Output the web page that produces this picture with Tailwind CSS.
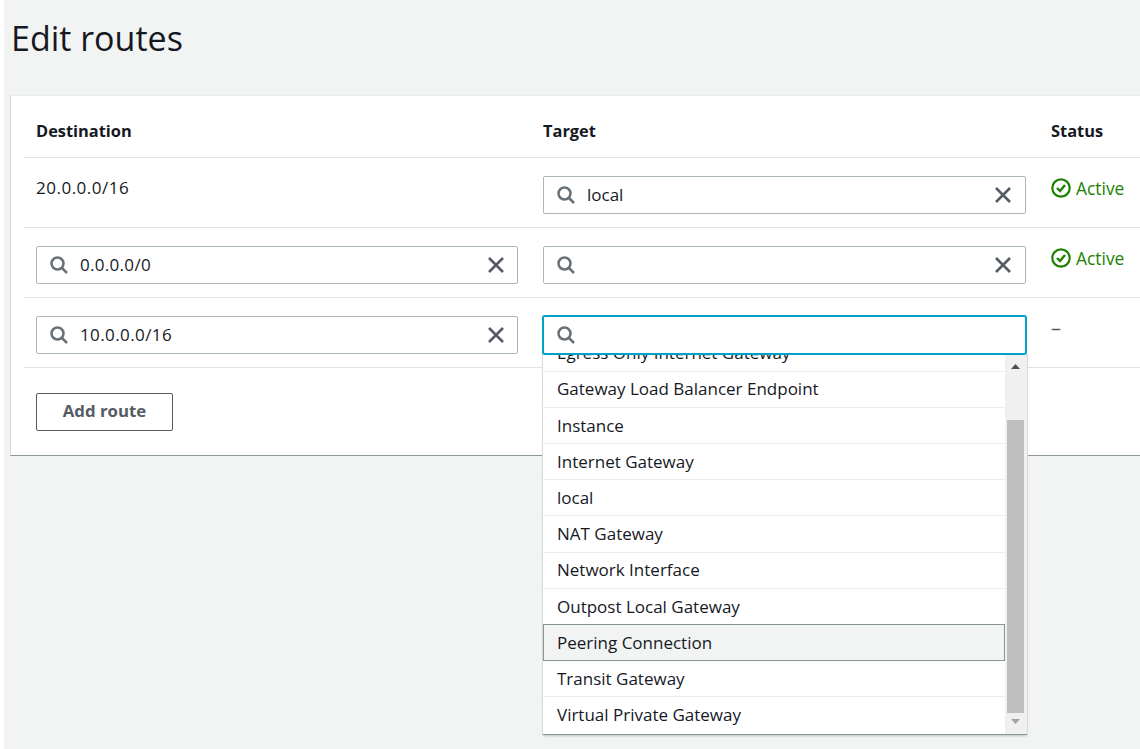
<!DOCTYPE html>
<html>
<head>
<meta charset="utf-8">
<script src="https://cdn.jsdelivr.net/npm/@tailwindcss/browser@4"></script>
</head>
<body class="bg-white overflow-hidden">
<div class="ml-[4px] w-[1136px] h-[749px] bg-[#f2f3f3] overflow-hidden font-['Open_Sans',sans-serif] text-[17px] text-[#16191f] relative">
  <h1 class="pl-[7px] h-[95px] pt-[14px] text-[34px] leading-[48px] font-normal">Edit routes</h1>
  <div class="ml-[6px] w-[1130px] h-[361px] bg-white border-l border-[#d5dbdb] border-t border-t-[#eaeded] border-b border-b-[#8d9a9b] pl-[13px]">
    <div class="h-[62px] flex border-b border-[#dfe3e3] font-bold text-[16.4px] items-center pt-[10px]">
      <div class="w-[519px] pl-[12px]">Destination</div>
      <div class="w-[508px]">Target</div>
      <div>Status</div>
    </div>
    <div class="h-[70px] flex border-b border-[#dfe3e3]">
      <div class="w-[519px] pl-[12px] pt-[18px] leading-[24px] tracking-[0.5px]">20.0.0.0/16</div>
      <div class="w-[508px] pt-[18px]">
        <div class="w-[483px] h-[38px] border border-[#aab7b8] rounded-[2px] flex items-center pl-[13px] pr-[13px]">
          <svg class="w-[18px] h-[18px] shrink-0" viewBox="0 0 18 18" fill="none" stroke="#687078" stroke-width="2.5"><circle cx="7.5" cy="7.5" r="6"/><path d="M12 12l5 5"/></svg>
          <span class="ml-[12px] flex-1">local</span>
          <svg class="w-[18px] h-[18px]" viewBox="0 0 18 18" fill="none" stroke="#545b64" stroke-width="2.6"><path d="M2 2l14 14M16 2L2 16"/></svg>
        </div>
      </div>
      <div class="pt-[18px] flex text-[#1d8102] text-[17.4px] leading-[24px] items-start">
        <svg class="w-[20px] h-[20px] mr-[5px] mt-[2px]" viewBox="0 0 20 20" fill="none" stroke="#1d8102" stroke-width="2.2"><circle cx="10" cy="10" r="8.7"/><path d="M6 10l3 3 5-6" stroke-width="2.4"/></svg>
        <span>Active</span>
      </div>
    </div>
    <div class="h-[70px] flex border-b border-[#dfe3e3]">
      <div class="w-[519px] pl-[12px] pt-[18px]">
        <div class="w-[482px] h-[38px] border border-[#aab7b8] rounded-[2px] flex items-center pl-[13px] pr-[12px]">
          <svg class="w-[18px] h-[18px] shrink-0" viewBox="0 0 18 18" fill="none" stroke="#687078" stroke-width="2.5"><circle cx="7.5" cy="7.5" r="6"/><path d="M12 12l5 5"/></svg>
          <span class="ml-[12px] flex-1 tracking-[0.3px]">0.0.0.0/0</span>
          <svg class="w-[18px] h-[18px]" viewBox="0 0 18 18" fill="none" stroke="#545b64" stroke-width="2.6"><path d="M2 2l14 14M16 2L2 16"/></svg>
        </div>
      </div>
      <div class="w-[508px] pt-[18px]">
        <div class="w-[483px] h-[38px] border border-[#aab7b8] rounded-[2px] flex items-center pl-[13px] pr-[13px]">
          <svg class="w-[18px] h-[18px] shrink-0" viewBox="0 0 18 18" fill="none" stroke="#687078" stroke-width="2.5"><circle cx="7.5" cy="7.5" r="6"/><path d="M12 12l5 5"/></svg>
          <span class="ml-[12px] flex-1"></span>
          <svg class="w-[18px] h-[18px]" viewBox="0 0 18 18" fill="none" stroke="#545b64" stroke-width="2.6"><path d="M2 2l14 14M16 2L2 16"/></svg>
        </div>
      </div>
      <div class="pt-[18px] flex text-[#1d8102] text-[17.4px] leading-[24px] items-start">
        <svg class="w-[20px] h-[20px] mr-[5px] mt-[2px]" viewBox="0 0 20 20" fill="none" stroke="#1d8102" stroke-width="2.2"><circle cx="10" cy="10" r="8.7"/><path d="M6 10l3 3 5-6" stroke-width="2.4"/></svg>
        <span>Active</span>
      </div>
    </div>
    <div class="h-[70px] flex border-b border-[#dfe3e3]">
      <div class="w-[519px] pl-[12px] pt-[18px]">
        <div class="w-[482px] h-[38px] border border-[#aab7b8] rounded-[2px] flex items-center pl-[13px] pr-[12px]">
          <svg class="w-[18px] h-[18px] shrink-0" viewBox="0 0 18 18" fill="none" stroke="#687078" stroke-width="2.5"><circle cx="7.5" cy="7.5" r="6"/><path d="M12 12l5 5"/></svg>
          <span class="ml-[12px] flex-1 tracking-[0.4px]">10.0.0.0/16</span>
          <svg class="w-[18px] h-[18px]" viewBox="0 0 18 18" fill="none" stroke="#545b64" stroke-width="2.6"><path d="M2 2l14 14M16 2L2 16"/></svg>
        </div>
      </div>
      <div class="w-[508px] pt-[18px]"></div>
      <div class="pt-[18px] leading-[24px] text-[20px] text-[#545b64]">–</div>
    </div>
    <div class="pl-[12px] pt-[25px]">
      <div class="w-[137px] h-[38px] border border-[#545b64] rounded-[2px] flex items-center justify-center font-bold text-[16.8px] text-[#545b64] pb-[2px]">Add route</div>
    </div>
  </div>

  <!-- focused input over the table -->
  <div class="absolute left-[538px] top-[315px] w-[485px] h-[40px] bg-white border-2 border-[#00a1c9] rounded-[3px] flex items-center pl-[13px] z-20">
    <svg class="w-[18px] h-[18px] shrink-0" viewBox="0 0 18 18" fill="none" stroke="#687078" stroke-width="2.5"><circle cx="7.5" cy="7.5" r="6"/><path d="M12 12l5 5"/></svg>
  </div>

  <!-- open dropdown -->
  <div class="absolute left-[539px] top-[354px] w-[484px] h-[381px] bg-white border-b border-[#879596] shadow-[-1px_0_0_0_#d5dbdb,1px_0_0_0_#d5dbdb,0_1px_2px_0_rgba(0,0,0,0.2)] overflow-hidden z-10 flex">
    <div class="w-[462px] overflow-hidden">
      <div class="mt-[-18.6px]">
        <div class="h-[36.2px] pl-[14px] flex items-center border-b border-[#eaeded]">Egress Only Internet Gateway</div>
        <div class="h-[36.2px] pl-[14px] flex items-center border-b border-[#eaeded]">Gateway Load Balancer Endpoint</div>
        <div class="h-[36.2px] pl-[14px] flex items-center border-b border-[#eaeded]">Instance</div>
        <div class="h-[36.2px] pl-[14px] flex items-center border-b border-[#eaeded]">Internet Gateway</div>
        <div class="h-[36.2px] pl-[14px] flex items-center border-b border-[#eaeded]">local</div>
        <div class="h-[36.2px] pl-[14px] flex items-center border-b border-[#eaeded]">NAT Gateway</div>
        <div class="h-[36.2px] pl-[14px] flex items-center border-b border-[#eaeded]">Network Interface</div>
        <div class="h-[36.2px] pl-[14px] flex items-center">Outpost Local Gateway</div>
        <div class="h-[37px] pl-[13px] flex items-center bg-[#f2f3f3] border border-[#879596] mt-[-1px]">Peering Connection</div>
        <div class="h-[36.2px] pl-[14px] flex items-center border-b border-[#eaeded]">Transit Gateway</div>
        <div class="h-[36.2px] pl-[14px] flex items-center">Virtual Private Gateway</div>
      </div>
    </div>
    <div class="w-[22px] bg-[#f0f0f0] flex flex-col items-start pl-[2px]">
      <div class="w-[17px] h-[17px] flex items-center justify-center">
        <svg class="w-[9px] h-[5px] mt-[8px]" viewBox="0 0 9 5"><path d="M4.5 0L9 5H0z" fill="#505050"/></svg>
      </div>
      <div class="mt-[49px] w-[17px] h-[293px] bg-[#bfbfbf]"></div>
      <div class="w-[17px] h-[17px] flex items-center justify-center">
        <svg class="w-[9px] h-[5px]" viewBox="0 0 9 5"><path d="M0 0H9L4.5 5z" fill="#a3a3a3"/></svg>
      </div>
    </div>
  </div>
</div>
</body>
</html>
